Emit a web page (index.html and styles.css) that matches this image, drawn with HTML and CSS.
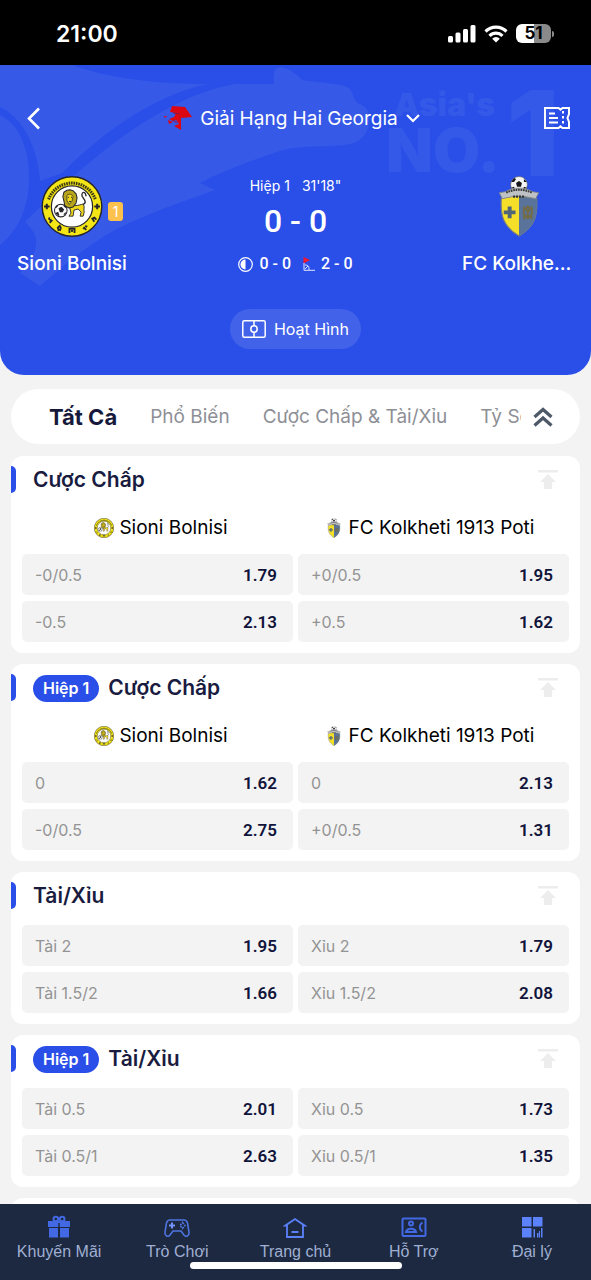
FILE: index.html
```html
<!DOCTYPE html>
<html lang="vi">
<head>
<meta charset="utf-8">
<meta name="viewport" content="width=device-width, initial-scale=1">
<title>Sioni Bolnisi - FC Kolkheti 1913 Poti</title>
<link rel="stylesheet" href="styles.css">
</head>
<body>
<svg class="defs" aria-hidden="true">
  <symbol id="sioni" viewBox="0 0 60 60">
    <circle cx="30" cy="30" r="29.3" fill="#f4e616" stroke="#26262a" stroke-width="1.4"/>
    <circle cx="30" cy="30" r="20.3" fill="#fff" stroke="#26262a" stroke-width="1.2"/>
    <path d="M7 23A24.5 24.5 0 0 1 53 23" fill="none" stroke="#3b3815" stroke-width="3" stroke-dasharray="1.6 .8"/>
    <path d="M2.500 30h5.500M5.200 27.200v5.600M52 30h5.500M54.800 27.200v5.600" stroke="#26262a" stroke-width="2"/>
    <path d="M7 42l3 2-2 2m0-4l-1-1M17 54l-1-3 2-2 1 2-1 3M27.500 56v-4h5v4m-2.500-3v2M44 53l-2-2-1 1m2-3l2 1M52 45l-2-3 2-1 2 2" fill="none" stroke="#26262a" stroke-width="1.8"/>
    <path d="M27 28c5 2 9 1 14-.500 2 3 0 5 1 8l-1 4h-3l1-4-3-3-4 1-1 6h-4l2-3z" fill="#efd91a" stroke="#26262a" stroke-width=".9"/>
    <path d="M41 28c4-2 1-5-1-8-1-3 1-5 3-3l1 3" fill="none" stroke="#26262a" stroke-width="1.3"/>
    <path d="M22 16l3-2 3-.500 3 1 3 3 1 4-1 5-3 4-4 1-4-2-1-5-1-4z" fill="#b8a51c" stroke="#26262a" stroke-width="1"/>
    <path d="M25 19c2-2 5-1 6 1l-1 5-3 3-2-4z" fill="#efd91a" stroke="#26262a" stroke-width=".7"/>
    <path d="M26 21h1m2 0h1m-3 4h2" stroke="#26262a"/>
    <circle cx="19" cy="34" r="6.200" fill="#fff" stroke="#26262a"/>
    <path d="M17.500 32l2-1 2 2-1 2h-2zM14 31l2-2M22 29l2 2M14 37l2-1 1 3M22 38l2-2" fill="#26262a" stroke="#26262a" stroke-width="1.3"/>
  </symbol>
  <symbol id="kolkheti" viewBox="0 0 42 62">
    <circle cx="21" cy="9" r="8.500" fill="#f5f5f5" stroke="#555" stroke-width=".6"/>
    <path d="M18 7l3-2 3 2-1 4h-4zM13 6l3-4 2 1-2 3zM26 3l3 3-3 0zM13 12l3-1 1 3zM25 14l1-3 3 1z" fill="#17171b"/>
    <path d="M3 23C15 19 27 19 39 23c1 18-2 28-18 38C5 51 2 41 3 23z" fill="#f6df28" stroke="#777d82" stroke-width="1.2"/>
    <path d="M21 21c7 0 12 1 18 2 1 18-2 28-18 38z" fill="#59739a"/>
    <path d="M1 17l6-1c9-5 19-5 28 0l6 1-3 6-5-1c-8-2-16-2-24 0l-5 1z" fill="#bfc2c4" stroke="#7d8184" stroke-width=".8"/>
    <path d="M8 17c8-4 18-4 26 0" fill="none" stroke="#333" stroke-width="2" stroke-dasharray="1.700 .8"/>
    <path d="M15 21h12" stroke="#333" stroke-width="2.300" stroke-dasharray="2 1"/>
    <path d="M9.500 31h4v4h4v4h-4v4h-4v-4h-4v-4h4z" fill="#4e6678"/>
    <path d="M26 31v8l4 4 4-4v-8M28 33l2-2 2 2-2 4zm-1 7l-1 4m7-4l1 4m-4-10v9" fill="none" stroke="#746b42" stroke-width="2"/>
  </symbol>
  <symbol id="totop" viewBox="0 0 20 20"><path d="M0 0h20v2.500H0zM10 4l8 8h-4v7H6v-7H2z" fill="currentColor"/></symbol>
</svg>

<div class="app">
  <div class="status">
    <span class="clock">21:00</span>
    <div class="status-icons">
      <svg width="28" height="18" viewBox="0 0 28 18" fill="#fff"><rect y="11" width="5" height="6.500" rx="1.500"/><rect x="7.500" y="7.500" width="5" height="10" rx="1.500"/><rect x="15" y="4" width="5" height="13.500" rx="1.500"/><rect x="22.500" y="0" width="5" height="17.500" rx="1.500"/></svg>
      <svg width="24" height="18" viewBox="0 0 24 18" fill="none" stroke="#fff" stroke-width="3.200"><path d="M1.500 6.500a15 15 0 0 1 21 0M5.500 10.800a9.300 9.300 0 0 1 13 0"/><path d="M12 17.500l-3.800-3.800a5.300 5.300 0 0 1 7.600 0z" fill="#fff" stroke="none"/></svg>
      <span class="battery">51</span>
    </div>
  </div>

  <header class="hero">
    <svg class="hero-art" viewBox="0 0 591 310" preserveAspectRatio="xMidYMin slice" aria-hidden="true">
      <g fill="#3659e8">
        <path d="M0 0H72C110 14 160 19 207 19C150 32 100 70 62 108L40 116C38 82 22 52 0 42z"/>
        <path d="M0 50C24 62 32 95 28 128C24 155 12 170 0 180z"/>
        <path d="M235 19H274C272 6 276 0 284 3C292 5 297 10 302 15C320 18 340 18 349 23C354 28 353 36 358 38C364 42 369 42 369 53C370 66 363 75 351 79C328 83 304 79 280 86C255 94 220 107 200 118L215 125C170 141 125 157 100 174C75 190 55 208 40 221L20 208C35 190 45 175 25 157C60 124 145 35 235 19z"/>
      </g>
      <g class="slogan"><text x="394" y="51" font-size="32">Asia's</text><text x="386" y="107" font-size="61">NO.</text><text x="506" y="111" font-size="118">1</text></g>
    </svg>
    <div class="topbar">
      <button class="icon-btn" aria-label="Quay lại"><svg width="13" height="23" viewBox="0 0 13 23" fill="none" stroke="#fff" stroke-width="2.600"><path d="M12 1.500L2 11.500l10 10"/></svg></button>
      <button class="league">
        <svg width="28" height="26" viewBox="0 0 28 26" fill="#dc0713"><path d="M8 1l13 1 7 10-11 1v12l-7-4 5-2-3-4-3 1-4-2 5-2 2-4-6-1z"/><path d="M0 11h3l-2 2zM4 15l5 2-4 2z"/><path d="M9 8l7 1M9 15l4 3" stroke="#8e1440" stroke-width="1"/></svg>
        <span>Giải Hạng Hai Georgia</span>
        <svg width="14" height="9" viewBox="0 0 14 9" fill="none" stroke="#fff" stroke-width="2.200"><path d="M1 1l6 6 6-6"/></svg>
      </button>
      <button class="icon-btn" aria-label="Phiếu cược"><svg width="26" height="24" viewBox="0 0 26 24" fill="none" stroke="#fff" stroke-width="2"><path d="M1 2h13.500l2 1.600 2-1.600H25v6l-1.500 4 1.500 4v6h-6.500l-2-1.600-2 1.600H1z"/><path d="M5 7.500h6M5 12h9M5 16.500h9"/><path d="M19 5v15" stroke-dasharray="2.500 2.500"/></svg></button>
    </div>
    <div class="match">
      <div class="team">
        <div class="crest"><svg class="crest-img"><use href="#sioni"/></svg><span class="card-badge">1</span></div>
        <span class="team-name">Sioni Bolnisi</span>
      </div>
      <div class="score">
        <div class="period"><span>Hiệp 1</span><span>31'18"</span></div>
        <div class="goals">0 - 0</div>
        <div class="extra">
          <svg width="15" height="15" viewBox="0 0 15 15"><circle cx="7.500" cy="7.500" r="6.800" fill="none" stroke="#fff" stroke-width="1.200"/><path d="M7.500 2.500v10a5 5 0 0 1 0-10z" fill="#fff"/></svg>
          <span>0 - 0</span>
          <svg class="corner" width="12" height="14" viewBox="0 0 12 14"><path d="M.5 0L7 3 .5 6.500z" fill="#f01830"/><path d="M1 6v7.300h11M2 8c4 0 4 2 4 5M2 12l3-3" fill="none" stroke="#dfe5ff" stroke-width="1"/></svg>
          <span>2 - 0</span>
        </div>
      </div>
      <div class="team">
        <div class="crest"><svg class="crest-img"><use href="#kolkheti"/></svg></div>
        <span class="team-name">FC Kolkheti 1913 Poti</span>
      </div>
    </div>
    <button class="live"><svg width="24" height="18" viewBox="0 0 24 18" fill="none" stroke="#fff" stroke-width="1.500"><rect x=".8" y=".8" width="22.400" height="16.400" rx="1.500"/><circle cx="12" cy="9" r="3.200"/><path d="M12 1v4.800M12 12.200V17"/></svg><span>Hoạt Hình</span></button>
  </header>

  <main class="content">
    <div class="tabs">
      <nav class="tab-list">
        <button class="tab active">Tất Cả</button><button class="tab">Phổ Biến</button><button class="tab">Cược Chấp &amp; Tài/Xỉu</button><button class="tab">Tỷ Số</button>
      </nav>
      <button class="icon-btn" aria-label="Thu gọn"><svg width="20" height="20" viewBox="0 0 20 20" fill="none" stroke="#4e5967" stroke-width="3.200"><path d="M1.500 10L10 2.500l8.500 7.500M1.500 18.500L10 11l8.500 7.500"/></svg></button>
    </div>

    <section class="market">
      <div class="market-head"><h2>Cược Chấp</h2><button class="icon-btn pin" aria-label="Ghim"><svg width="20" height="20"><use href="#totop"/></svg></button></div>
      <div class="grid sides"><div class="home"><svg class="mini"><use href="#sioni"/></svg>Sioni Bolnisi</div><div class="away"><svg class="mini"><use href="#kolkheti"/></svg>FC Kolkheti 1913 Poti</div></div>
      <div class="grid">
        <button class="odd"><span>-0/0.5</span><b>1.79</b></button><button class="odd"><span>+0/0.5</span><b>1.95</b></button>
        <button class="odd"><span>-0.5</span><b>2.13</b></button><button class="odd"><span>+0.5</span><b>1.62</b></button>
      </div>
    </section>

    <section class="market">
      <div class="market-head"><span class="half">Hiệp 1</span><h2>Cược Chấp</h2><button class="icon-btn pin" aria-label="Ghim"><svg width="20" height="20"><use href="#totop"/></svg></button></div>
      <div class="grid sides"><div class="home"><svg class="mini"><use href="#sioni"/></svg>Sioni Bolnisi</div><div class="away"><svg class="mini"><use href="#kolkheti"/></svg>FC Kolkheti 1913 Poti</div></div>
      <div class="grid">
        <button class="odd"><span>0</span><b>1.62</b></button><button class="odd"><span>0</span><b>2.13</b></button>
        <button class="odd"><span>-0/0.5</span><b>2.75</b></button><button class="odd"><span>+0/0.5</span><b>1.31</b></button>
      </div>
    </section>

    <section class="market">
      <div class="market-head"><h2>Tài/Xỉu</h2><button class="icon-btn pin" aria-label="Ghim"><svg width="20" height="20"><use href="#totop"/></svg></button></div>
      <div class="grid">
        <button class="odd"><span>Tài 2</span><b>1.95</b></button><button class="odd"><span>Xỉu 2</span><b>1.79</b></button>
        <button class="odd"><span>Tài 1.5/2</span><b>1.66</b></button><button class="odd"><span>Xỉu 1.5/2</span><b>2.08</b></button>
      </div>
    </section>

    <section class="market">
      <div class="market-head"><span class="half">Hiệp 1</span><h2>Tài/Xỉu</h2><button class="icon-btn pin" aria-label="Ghim"><svg width="20" height="20"><use href="#totop"/></svg></button></div>
      <div class="grid">
        <button class="odd"><span>Tài 0.5</span><b>2.01</b></button><button class="odd"><span>Xỉu 0.5</span><b>1.73</b></button>
        <button class="odd"><span>Tài 0.5/1</span><b>2.63</b></button><button class="odd"><span>Xỉu 0.5/1</span><b>1.35</b></button>
      </div>
    </section>

    <section class="market next"></section>
  </main>

  <nav class="bottom">
    <a href="#"><svg width="24" height="24" viewBox="0 0 24 24" fill="#4268e4"><path d="M1 6h22v6H1zM2 13h9v9.500H2zM13 13h9v9.500h-9z"/><path d="M11.300 8h1.400v12h-1.400z" fill="#1c2940"/><g fill="none" stroke="#4268e4" stroke-width="2"><circle cx="8.800" cy="4" r="2.300"/><circle cx="15.200" cy="4" r="2.300"/></g></svg><span>Khuyến Mãi</span></a>
    <a href="#"><svg width="26" height="24" viewBox="0 0 26 24" fill="none" stroke="#4f74df" stroke-width="1.600"><path d="M6 5h14c2 0 3 1 3.500 3L25 17c.4 4-3 5.500-5 3l-3-4H9l-3 4c-2 2.500-5.400 1-5-3l1.500-9C3 6 4 5 6 5z"/><path d="M8 7.500v6M5 10.500h6" stroke="#7391ff" stroke-width="2"/><path d="M18.500 7.500l2.500 3-2.500 3-2.500-3z" stroke-dasharray="2 1"/></svg><span>Trò Chơi</span></a>
    <a href="#"><svg width="24" height="24" viewBox="0 0 24 24" fill="none" stroke="#5b82fa" stroke-width="1.800"><path d="M4 22V10.500H2.500L12 4l9.500 6.500H20V22zM8.500 17h7"/></svg><span>Trang chủ</span></a>
    <a href="#"><svg width="26" height="24" viewBox="0 0 26 24" fill="none" stroke="#4268e4" stroke-width="2"><rect x="1.500" y="3.500" width="23" height="17.500" rx="1"/><circle cx="10" cy="8.500" r="2"/><path d="M5 17c1-4.500 9-4.500 10 0z"/><path d="M21.500 7.500c-3.500 2-3.500 7 0 9"/></svg><span>Hỗ Trợ</span></a>
    <a href="#"><svg width="24" height="24" viewBox="0 0 24 24" fill="#5b82fa"><path d="M2 2h9.500v9.500H2zM13 2h9.500v9.500H13zM2 13h9.500v9.500H2zM13.500 14H15v8.500h-1.500zM17 18h1.500v4.500H17zM19 16h1v6.500h-1zM21 13h1.500v9.500H21z"/></svg><span>Đại lý</span></a>
    <i class="home-bar"></i>
  </nav>
</div>
</body>
</html>
```
FILE: styles.css
```css
* { box-sizing: border-box; }
body { margin: 0; font-family: Inter, "Noto Sans", sans-serif; background: #f3f3f3; color: #000; }
button { border: 0; padding: 0; background: none; color: inherit; font: inherit; text-align: left; }
h2 { margin: 0; }
svg { flex: none; display: block; }
.defs { position: absolute; width: 0; height: 0; }

.app { height: 100vh; display: flex; flex-direction: column; }

.status { flex: none; display: flex; justify-content: space-between; align-items: center; height: 65px; padding: 2px 40px 0 56px; background: #000; color: #fff; }
.clock { font-size: 23px; font-weight: 600; }
.status-icons { display: flex; align-items: center; gap: 8px; }
.battery { position: relative; width: 35px; height: 19px; border-radius: 6px; background: linear-gradient(90deg, #fff 51%, #8a8a8a 51%); color: #000; font-size: 17px; line-height: 19px; font-weight: 700; text-align: center; }
.battery::after { content: ""; position: absolute; right: -3px; top: 7px; width: 2px; height: 6px; border-radius: 0 2px 2px 0; background: #8a8a8a; }

.hero { flex: none; position: relative; height: 310px; border-radius: 0 0 24px 24px; overflow: hidden; background: #2a4fe8; color: #fff; display: flex; flex-direction: column; align-items: center; }
.hero > * { position: relative; }
.hero .hero-art { position: absolute; inset: 0; width: 100%; height: 100%; }
.slogan { fill: #3458e8; font-weight: 900; font-family: Inter, sans-serif; }
.icon-btn { display: flex; align-items: center; justify-content: center; }
.topbar { width: 100%; height: 106px; padding: 0 21px 0 27px; display: flex; align-items: center; justify-content: space-between; }
.league { display: flex; align-items: center; gap: 8px; font-size: 19px; }
.match { width: 100%; padding: 5px 14px 0; display: flex; justify-content: space-between; }
.team { width: 116px; display: flex; flex-direction: column; align-items: center; gap: 15px; }
.crest { position: relative; }
.crest-img { width: 62px; height: 61px; }
.card-badge { position: absolute; left: 67px; top: 26px; width: 15px; height: 19px; border-radius: 3px; background: #fdc14e; font-size: 14px; line-height: 19px; text-align: center; }
.team-name { max-width: 114px; overflow: hidden; text-overflow: ellipsis; white-space: nowrap; font-size: 19px; line-height: 24px; font-weight: 500; }
.score { display: flex; flex-direction: column; align-items: center; }
.period { display: flex; gap: 12px; font-size: 14px; line-height: 20px; }
.goals { font: 500 32px/40px Roboto, sans-serif; padding: 5px 0; }
.extra { display: flex; align-items: center; gap: 6px; margin-top: 6px; font: 500 16px/24px Roboto, sans-serif; }
.corner { margin-left: 6px; }
.live { display: flex; align-items: center; gap: 8px; margin-top: 33px; height: 40px; padding: 0 12px; border-radius: 20px; background: #4262e9; font-size: 16px; }

.content { flex: 1; min-height: 0; overflow: hidden; display: flex; flex-direction: column; gap: 11px; padding: 14px 11px 0; }
.tabs { flex: none; display: flex; align-items: center; height: 55px; padding: 0 27px 0 38px; margin-bottom: 1px; border-radius: 28px; background: #fff; }
.tab-list { flex: 1; min-width: 0; display: flex; gap: 33px; overflow: hidden; margin-right: 12px; }
.tab { flex: none; white-space: nowrap; font-size: 19px; line-height: 32px; color: #8e8f96; }
.tab.active { font-size: 22px; font-weight: 700; color: #16193b; }

.market { flex: none; padding: 0 11px 11px; border-radius: 12px; background: #fff; }
.market-head { position: relative; display: flex; align-items: center; gap: 9px; height: 48px; margin-bottom: 5px; padding-left: 11px; }
.market-head::before { content: ""; position: absolute; left: -11px; top: 10px; width: 5px; height: 27px; border-radius: 0 5px 5px 0; background: #2a4fe8; }
.market-head h2 { font-size: 21px; line-height: 28px; font-weight: 600; color: #191c40; }
.half { height: 27px; padding: 0 10px; border-radius: 14px; background: #2a4fe8; color: #fff; font-size: 16px; line-height: 27px; font-weight: 600; }
.pin { margin-left: auto; margin-right: 11px; color: #ededed; }
.grid { display: grid; grid-template-columns: 1fr 1fr; gap: 6px 5px; }
.sides { padding-bottom: 7px; font-size: 19px; line-height: 38px; }
.sides > div { display: flex; align-items: center; justify-content: center; gap: 5px; white-space: nowrap; }
.sides .home { padding-left: 7px; }
.sides .away { padding-right: 9px; }
.mini { width: 20px; height: 20px; }
.odd { display: flex; align-items: center; justify-content: space-between; height: 41px; padding: 0 16px 0 13px; border-radius: 5px; background: #f3f3f3; }
.odd span { font-size: 16px; color: #939393; }
.odd b { font: 600 17px/24px Roboto, sans-serif; color: #10133a; }
.next { height: 60px; }

.bottom { flex: none; position: relative; display: grid; grid-template-columns: repeat(5, 1fr); height: 76px; padding-top: 11px; background: #1c2940; }
.bottom a { display: flex; flex-direction: column; align-items: center; gap: 3px; color: #a0afd3; text-decoration: none; font: 16px/20px "Liberation Sans", Arial, sans-serif; }
.home-bar { position: absolute; left: 50%; bottom: 11px; width: 212px; height: 7px; margin-left: -106px; border-radius: 4px; background: #fff; }
```
